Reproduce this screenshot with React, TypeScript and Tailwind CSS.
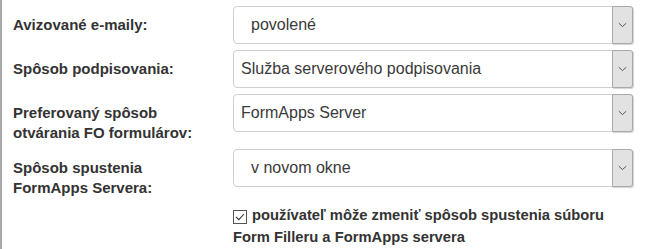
import React from 'react';

type Row = {
  label: string[];
  value: string;
  pad: string;
};

const rows: Row[] = [
  { label: ['Avizované e-maily:'], value: 'povolené', pad: 'pl-[17px]' },
  { label: ['Spôsob podpisovania:'], value: 'Služba serverového podpisovania', pad: 'pl-[7px]' },
  { label: ['Preferovaný spôsob', 'otvárania FO formulárov:'], value: 'FormApps Server', pad: 'pl-[7px]' },
  { label: ['Spôsob spustenia', 'FormApps Servera:'], value: 'v novom okne', pad: 'pl-[17px]' },
];

const Chevron: React.FC = () => (
  <svg width="9" height="6" viewBox="0 0 9 6" fill="none">
    <path d="M0.8 1.2 L4.5 4.6 L8.2 1.2" stroke="#555" strokeWidth="1" />
  </svg>
);

const SelectBox: React.FC<{ value: string; pad: string }> = ({ value, pad }) => (
  <div className="flex h-[38px] w-[400px] rounded-[4px] border border-[#cfcfcf] bg-white">
    <div className={`flex flex-1 items-center ${pad} text-[16px] text-[#3a3a3a]`}>{value}</div>
    <div className="-my-px -mr-px flex w-[21px] items-center justify-center rounded-r-[3px] border border-[#a9a9a9] bg-[#e2e2e2] shadow-[1px_1px_1px_rgba(0,0,0,0.18)]">
      <Chevron />
    </div>
  </div>
);

const App: React.FC = () => {
  return (
    <div className="h-[249px] w-[649px] overflow-hidden border-l-2 border-[#a9a9a9] bg-white pl-[11px] pt-[6px] font-['Liberation_Sans',Arial,sans-serif] text-[#333]">
      <div className="flex flex-col gap-[6px]">
        {rows.map((row) => (
          <div key={row.value} className="flex items-start">
            <div className="w-[220px] pt-[9px] text-[15px] font-bold leading-5">
              {row.label.map((line) => (
                <div key={line}>{line}</div>
              ))}
            </div>
            <SelectBox value={row.value} pad={row.pad} />
          </div>
        ))}
      </div>

      {/* checkbox option */}
      <div className="ml-[220px] mt-[6px] w-[400px] text-[14.75px] font-bold leading-[22px]">
        <span className="mr-[5px] inline-flex h-[14px] w-[14px] translate-y-[1px] items-center justify-center border border-[#555] bg-white align-baseline">
          <svg width="10" height="8" viewBox="0 0 10 8" fill="none">
            <path d="M1 3.9 L3.8 6.7 L9 1" stroke="#333" strokeWidth="1.1" />
          </svg>
        </span>
        používateľ môže zmeniť spôsob spustenia súboru Form Filleru a FormApps servera
      </div>
    </div>
  );
};

export default App;
